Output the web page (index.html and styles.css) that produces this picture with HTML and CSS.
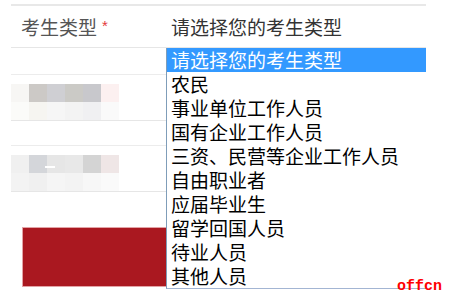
FILE: index.html
```html
<!DOCTYPE html>
<html>
<head>
<meta charset="utf-8">
<link rel="stylesheet" href="styles.css">
</head>
<body>
<div class="page">
  <div class="form">
    <div class="row row-head">
      <div class="label">考生类型<span class="req">*</span></div>
      <div class="value">请选择您的考生类型</div>
    </div>
    <div class="row row-a"></div>
    <div class="row row-b">
      <div class="mosaic">
        <i style="background:#f7f6f4"></i><i style="background:#ccc9c6"></i><i style="background:#cfcfd3"></i><i style="background:#cbcac6"></i><i style="background:#c8c8cc"></i><i style="background:#fcf0f0"></i>
        <i style="background:#fbfbf9"></i><i style="background:#f6f5f1"></i><i style="background:#f6f6f6"></i><i style="background:#f3f3f3"></i><i style="background:#f0f0f2"></i><i style="background:#fafafa"></i>
      </div>
    </div>
    <div class="row row-c"></div>
    <div class="row row-d">
      <div class="mosaic">
        <i style="background:#f0f0f0"></i><i style="background:#d4d6da"></i><i class="dash" style="background:#e6e6e6"></i><i style="background:#e8e8e8"></i><i style="background:#d4d4d4"></i><i style="background:#efe6e6"></i>
        <i style="background:#f3f3f3"></i><i style="background:#f0f0f0"></i><i style="background:#f5f5f5"></i><i style="background:#f3f3f3"></i><i style="background:#f7f7f7"></i><i style="background:#fafafa"></i>
      </div>
    </div>
    <div class="submit"></div>
  </div>

  <ul class="dropdown">
    <li class="selected">请选择您的考生类型</li>
    <li>农民</li>
    <li>事业单位工作人员</li>
    <li>国有企业工作人员</li>
    <li>三资、民营等企业工作人员</li>
    <li>自由职业者</li>
    <li>应届毕业生</li>
    <li>留学回国人员</li>
    <li>待业人员</li>
    <li>其他人员</li>
  </ul>

  <div class="watermark">offcn</div>
</div>
</body>
</html>
```

FILE: styles.css
```css
html, body {
  margin: 0;
  padding: 0;
  background: #ffffff;
}

.page {
  position: relative;
  width: 462px;
  height: 300px;
  overflow: hidden;
  font-family: "Noto Sans CJK SC", "Noto Sans", sans-serif;
}

.form {
  margin: 4px 0 0 11px;
  width: 415px;
  border-top: 2px solid #e8e8e8;
}

.row {
  border-bottom: 1px solid #e6e6e6;
}

.row-head {
  display: flex;
  align-items: center;
  height: 41px;
}

.label {
  width: 160px;
  padding-left: 10px;
  box-sizing: border-box;
  font-size: 19px;
  color: #555555;
  line-height: 1;
  display: flex;
  align-items: flex-start;
}

.req {
  color: #e4393c;
  font-family: "Liberation Sans", sans-serif;
  font-size: 15px;
  margin-left: 5px;
  margin-top: 1px;
}

.value {
  font-size: 19px;
  color: #333333;
  line-height: 1;
}

.row-a {
  width: 155px;
  height: 26px;
  border-bottom-color: #ececec;
}

.row-b {
  width: 155px;
  height: 46px;
  padding-top: 0;
  display: flex;
  align-items: flex-end;
  box-sizing: border-box;
}

.row-c {
  width: 155px;
  height: 24px;
  border-bottom-color: #ececec;
}

.row-d {
  width: 155px;
  height: 46px;
  display: flex;
  align-items: flex-end;
  box-sizing: border-box;
}

.mosaic {
  display: grid;
  grid-template-columns: repeat(6, 18px);
  grid-auto-rows: 18px;
  margin-bottom: 0;
}

.mosaic i {
  display: block;
  position: relative;
}

.mosaic i.dash::after {
  content: "";
  position: absolute;
  left: -2px;
  top: 11px;
  width: 10px;
  height: 2px;
  background: #ffffff;
}

.submit {
  margin: 35px 0 0 11px;
  width: 200px;
  height: 60px;
  box-sizing: border-box;
  background: #aa1820;
  border: 1px solid #e3a3a6;
}

.dropdown {
  position: absolute;
  left: 166px;
  top: 48px;
  width: 260px;
  margin: 0;
  padding: 0;
  list-style: none;
  background: #ffffff;
  border-left: 1px solid #7f9db9;
  border-bottom: 1px solid #a3b5d3;
  box-sizing: border-box;
}

.dropdown li {
  height: 24px;
  line-height: 24px;
  padding-left: 4px;
  font-size: 19px;
  color: #000000;
  white-space: nowrap;
}

.dropdown li.selected {
  background: #3399ff;
  color: #ffffff;
}

.watermark {
  position: absolute;
  left: 397px;
  top: 279px;
  font-family: "Liberation Mono", monospace;
  font-weight: bold;
  font-size: 15px;
  line-height: 15px;
  color: #ff0000;
}
```
